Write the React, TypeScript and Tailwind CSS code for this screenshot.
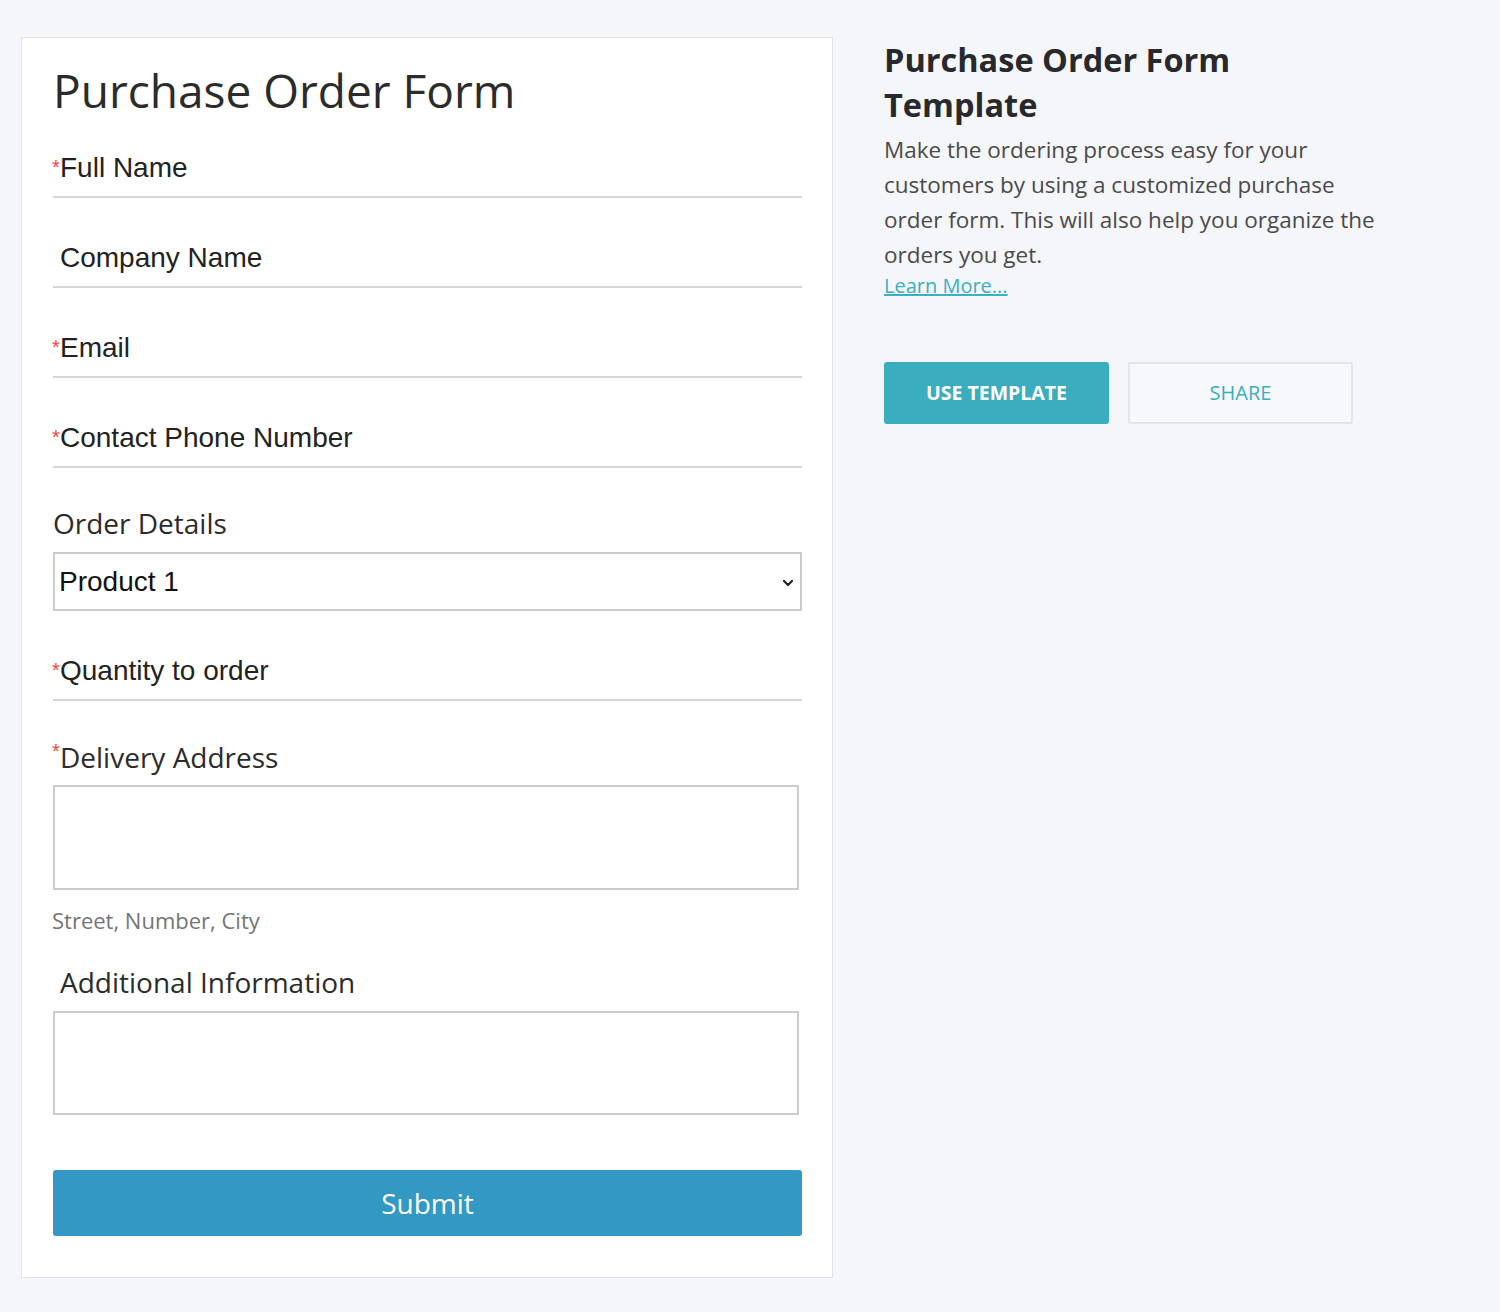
import React from "react";

const OS = "font-['Open_Sans',sans-serif]";
const AR = "font-['Liberation_Sans',Arial,sans-serif]";

function Star({ high }: { high?: boolean }) {
  return (
    <span
      className={`inline-block w-[8px] -ml-[1px] align-top text-[20px] leading-none text-[#ef4444] font-['Liberation_Sans',Arial,sans-serif] ${
        high ? "pt-[0px]" : "pt-[5px]"
      }`}
    >
      *
    </span>
  );
}

function LineField({ label, required, className = "" }: { label: string; required?: boolean; className?: string }) {
  return (
    <div className={`border-b-2 border-[#d6d6d6] pb-[12px] ${className}`}>
      <div className={`${AR} text-[28px] leading-[32px] text-[#222222] whitespace-nowrap`}>
        {required ? <Star /> : <span className="inline-block w-[7px]" />}
        {label}
      </div>
    </div>
  );
}

export default function App() {
  return (
    <div className="min-h-[1312px] w-[1500px] bg-[#f5f6fa] flex items-start pl-[21px] pt-[37px] gap-[51px]">
      <div className="w-[812px] bg-white border border-[#e2e3e7] pl-[31px] pr-[30px] pt-[23px] pb-[41px] flex flex-col">
        <h1 className={`${OS} text-[46px] leading-[58px] text-[#2b2b2b] font-normal`}>Purchase Order Form</h1>

        <LineField label="Full Name" required className="mt-[33px]" />
        <LineField label="Company Name" className="mt-[44px]" />
        <LineField label="Email" required className="mt-[44px]" />
        <LineField label="Contact Phone Number" required className="mt-[44px]" />

        <div className={`${OS} mt-[39px] text-[28px] leading-[32px] text-[#2b2b2b]`}>Order Details</div>
        <div className="mt-[13px] h-[59px] border-2 border-[#cccccc] flex items-center justify-between pl-[4px] pr-[5px]">
          <span className={`${AR} text-[28px] leading-[32px] text-[#111111]`}>Product 1</span>
          <svg width="14" height="10" viewBox="0 0 14 10" className="mt-[2px]">
            <path d="M3 3 L7 7 L11 3" fill="none" stroke="#222" strokeWidth="2.2" strokeLinecap="round" strokeLinejoin="round" />
          </svg>
        </div>

        <LineField label="Quantity to order" required className="mt-[44px]" />

        <div className={`${OS} mt-[40px] text-[28px] leading-[32px] text-[#2b2b2b] whitespace-nowrap`}>
          <Star high />
          Delivery Address
        </div>
        <div className="mt-[12px] w-[746px] h-[105px] border-2 border-[#cccccc]" />
        <div className={`${OS} mt-[16px] -ml-[1px] text-[22px] leading-[28px] text-[#757575]`}>Street, Number, City</div>

        <div className={`${OS} mt-[32px] pl-[7px] text-[28px] leading-[32px] text-[#2b2b2b]`}>Additional Information</div>
        <div className="mt-[13px] w-[746px] h-[104px] border-2 border-[#cccccc]" />

        <button
          className={`${OS} mt-[55px] h-[66px] w-full bg-[#3498c4] rounded-[3px] text-white text-[28px] leading-[32px]`}
        >
          Submit
        </button>
      </div>

      <div className="w-[498px] flex flex-col items-start">
        <h2 className={`${OS} text-[32.5px] leading-[45px] font-bold text-[#27292d]`}>Purchase Order Form Template</h2>
        <p className={`${OS} mt-[5px] text-[22.5px] leading-[35px] text-[#4a4a4a]`}>
          Make the ordering process easy for your customers by using a customized purchase order form. This will also
          help you organize the orders you get.
        </p>
        <a className={`${OS} text-[20px] leading-[28px] text-[#3bb0c2] underline`} href="#">
          Learn More...
        </a>
        <div className="mt-[62px] flex gap-[19px]">
          <button
            className={`${OS} w-[225px] h-[62px] bg-[#3aaebe] rounded-[3px] text-white font-bold text-[19.5px]`}
          >
            USE TEMPLATE
          </button>
          <button
            className={`${OS} w-[225px] h-[62px] border-2 border-[#e4e5e8] bg-[#f7f8fb] rounded-[2px] text-[#3aaebe] text-[20px]`}
          >
            SHARE
          </button>
        </div>
      </div>
    </div>
  );
}
